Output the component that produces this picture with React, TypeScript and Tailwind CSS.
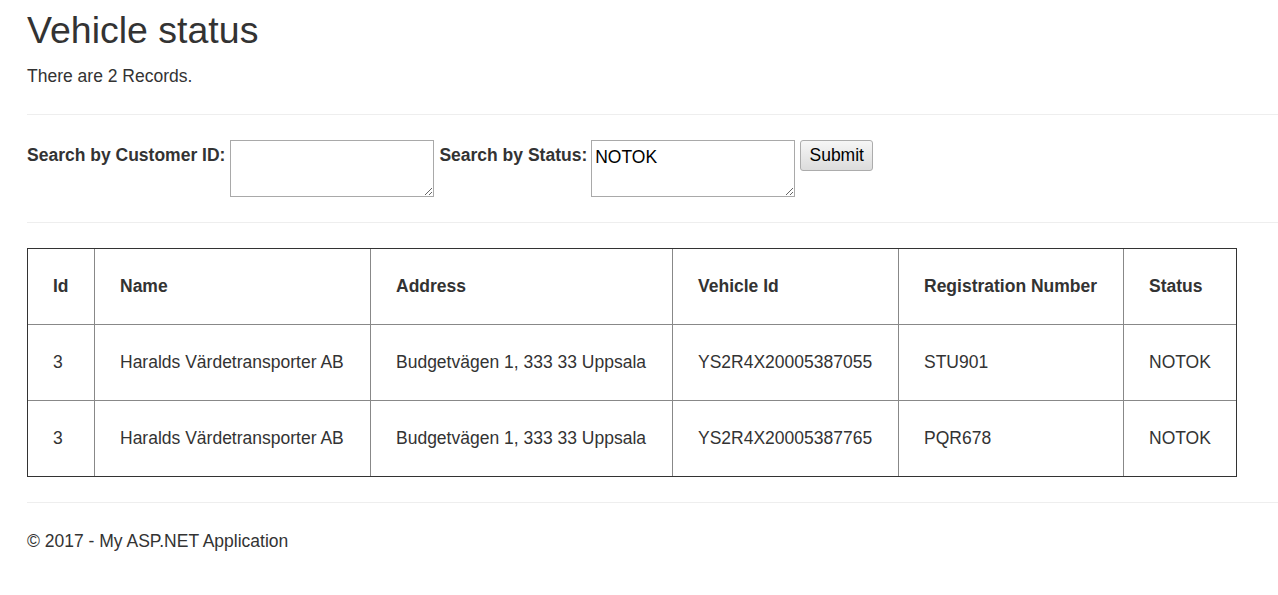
import React from "react";

const rows = [
  {
    id: "3",
    name: "Haralds Värdetransporter AB",
    address: "Budgetvägen 1, 333 33 Uppsala",
    vehicle: "YS2R4X20005387055",
    reg: "STU901",
    status: "NOTOK",
  },
  {
    id: "3",
    name: "Haralds Värdetransporter AB",
    address: "Budgetvägen 1, 333 33 Uppsala",
    vehicle: "YS2R4X20005387765",
    reg: "PQR678",
    status: "NOTOK",
  },
];

const cols = ["Id", "Name", "Address", "Vehicle Id", "Registration Number", "Status"];
const widths = ["w-[67px]", "w-[276px]", "w-[302px]", "w-[226px]", "w-[225px]", "w-[112px]"];

export default function App() {
  return (
    <div className="min-h-screen bg-white font-['Liberation_Sans',Arial,sans-serif] text-[17.5px] leading-[25px] text-[#333]">
      <div className="pl-[27px]">
        <h2 className="pt-[10px] text-[37.5px] leading-[41px] font-normal">Vehicle status</h2>
        <p className="mt-[13px]">There are 2 Records.</p>

        <hr className="mt-[25px] border-t border-[#eee]" />

        <form className="mt-[25px] flex items-start" onSubmit={(e) => e.preventDefault()}>
          <label className="pt-[3px] font-bold">Search by Customer ID:</label>
          <textarea className="ml-[5px] h-[57px] w-[204px] border border-[#a9a9a9] bg-white p-[3px] text-[17.5px] leading-normal text-black" />
          <label className="ml-[5px] pt-[3px] font-bold">Search by Status:</label>
          <textarea
            className="ml-[4px] h-[57px] w-[204px] border border-[#a9a9a9] bg-white px-[3px] py-[3px] text-[17.5px] leading-normal text-black"
            defaultValue="NOTOK"
          />
          <button
            type="submit"
            className="ml-[5px] h-[31px] w-[73px] rounded-[3px] border border-[#acacac] bg-gradient-to-b from-[#f6f6f6] to-[#dcdcdc] text-[17.5px] leading-normal text-black"
          >
            Submit
          </button>
        </form>

        <hr className="mt-[25px] border-t border-[#eee]" />

        <table className="mt-[25px] w-[1210px] table-fixed border-separate border-spacing-0 border border-[#333]">
          <thead>
            <tr>
              {cols.map((c, i) => (
                <th
                  key={c}
                  className={`${widths[i]} border-b border-[#888] p-[25px] text-left font-bold ${i < cols.length - 1 ? "border-r" : ""}`}
                >
                  {c}
                </th>
              ))}
            </tr>
          </thead>
          <tbody>
            {rows.map((r, ri) => {
              const cells = [r.id, r.name, r.address, r.vehicle, r.reg, r.status];
              return (
                <tr key={ri}>
                  {cells.map((v, i) => (
                    <td
                      key={i}
                      className={`border-[#888] p-[25px] ${i < cells.length - 1 ? "border-r" : ""} ${ri < rows.length - 1 ? "border-b" : ""}`}
                    >
                      {v}
                    </td>
                  ))}
                </tr>
              );
            })}
          </tbody>
        </table>

        <hr className="mt-[25px] border-t border-[#eee]" />

        <footer className="mt-[26px] pb-[40px]">
          <p>© 2017 - My ASP.NET Application</p>
        </footer>
      </div>
    </div>
  );
}
